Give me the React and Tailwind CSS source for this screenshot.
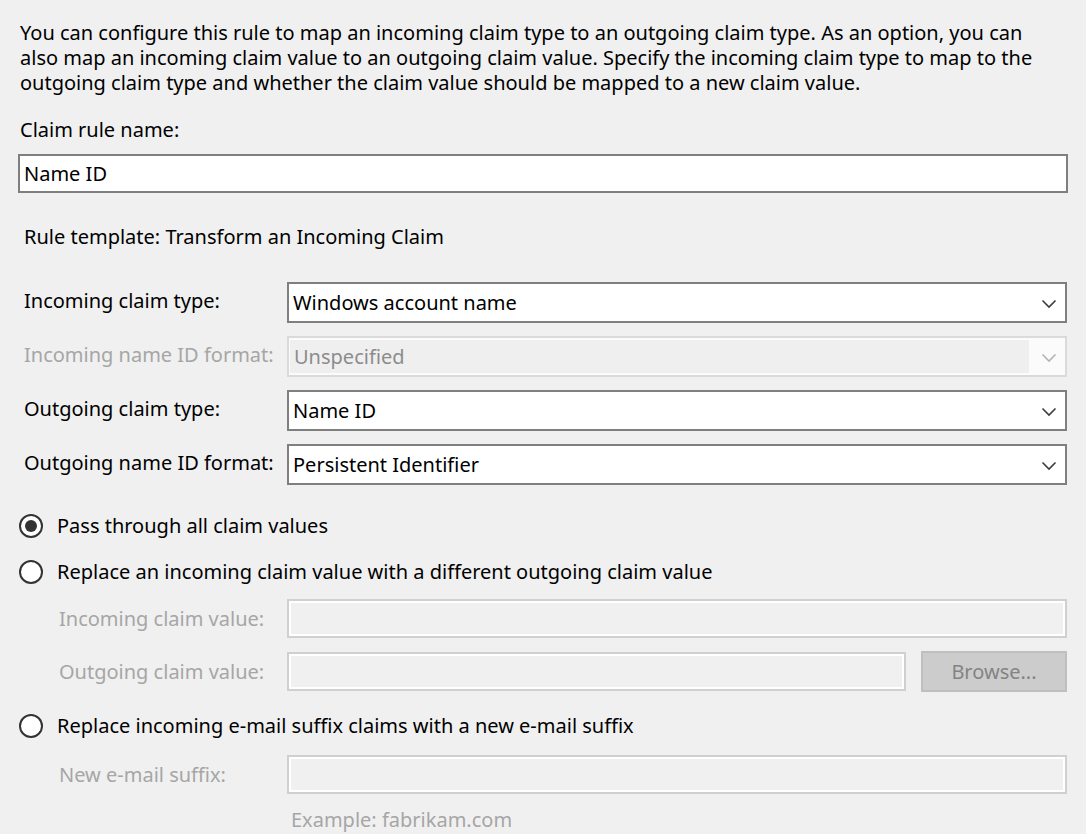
import React from 'react';

const Chevron = ({ disabled }) => (
  <svg width="16" height="10" viewBox="0 0 16 10" className="shrink-0">
    <polyline
      points="1.5,1.5 8,8 14.5,1.5"
      fill="none"
      stroke={disabled ? '#b4b4b4' : '#3c3c3c'}
      strokeWidth="1.6"
    />
  </svg>
);

const Dropdown = ({ value, disabled }) =>
  disabled ? (
    <div className="flex-1 h-[41px] border-2 border-[#dadada] bg-[#fbfbfb] flex items-stretch">
      <div className="flex-1 bg-[#efefef] my-[2px] ml-[1px] mr-[4px] pl-[4px] flex items-center text-[#8c8c8c]">
        {value}
      </div>
      <div className="w-[32px] flex items-center justify-center pt-[2px]">
        <Chevron disabled />
      </div>
    </div>
  ) : (
    <div className="flex-1 h-[41px] border-2 border-[#7f7f7f] bg-white flex items-center pl-[4px]">
      <span className="flex-1">{value}</span>
      <div className="w-[32px] flex items-center justify-center pt-[2px]">
        <Chevron />
      </div>
    </div>
  );

const DisabledInput = ({ className = '' }) => (
  <div
    className={`h-[39px] border-2 border-[#d0d0d0] bg-[#f0f0f0] shadow-[inset_0_0_0_2px_#ffffff] ${className}`}
  />
);

const Radio = ({ checked, label }) => (
  <div className="flex items-center h-[25px]">
    <div className="w-[24px] h-[24px] ml-[19px] rounded-full border-2 border-[#333333] bg-white flex items-center justify-center">
      {checked && <div className="w-[12px] h-[12px] rounded-full bg-[#333333]" />}
    </div>
    <span className="ml-[14px]">{label}</span>
  </div>
);

const rows = [
  { label: 'Incoming claim type:', value: 'Windows account name' },
  { label: 'Incoming name ID format:', value: 'Unspecified', disabled: true },
  { label: 'Outgoing claim type:', value: 'Name ID' },
  { label: 'Outgoing name ID format:', value: 'Persistent Identifier' },
];

export default function App() {
  return (
    <div className="w-[1086px] h-[834px] bg-[#f0f0f0] text-black text-[20px] leading-[25px] font-['Noto_Sans',sans-serif] overflow-hidden">
      <p className="pt-[20px] pl-[20px] pr-[30px]">
        You can configure this rule to map an incoming claim type to an outgoing claim type. As an option, you can
        also map an incoming claim value to an outgoing claim value. Specify the incoming claim type to map to the
        outgoing claim type and whether the claim value should be mapped to a new claim value.
      </p>

      <div className="mt-[22px] pl-[20px]">Claim rule name:</div>
      <div className="mt-[12px] ml-[18px] w-[1050px] h-[39px] border-2 border-[#7f7f7f] bg-white flex items-center pl-[4px]">
        Name ID
      </div>

      <div className="mt-[31px] pl-[24px]">Rule template: Transform an Incoming Claim</div>

      <div className="mt-[33px] flex flex-col gap-[13px] pl-[24px] pr-[19px]">
        {rows.map((r) => (
          <div key={r.label} className="flex items-center">
            <div className={`w-[263px] pb-[4px] ${r.disabled ? 'text-[#a6a6a6]' : ''}`}>{r.label}</div>
            <Dropdown value={r.value} disabled={r.disabled} />
          </div>
        ))}
      </div>

      <div className="mt-[28px]">
        <Radio checked label="Pass through all claim values" />
      </div>
      <div className="mt-[21px]">
        <Radio label="Replace an incoming claim value with a different outgoing claim value" />
      </div>

      <div className="mt-[15px] flex flex-col gap-[13px] pl-[59px] pr-[19px] text-[#a6a6a6]">
        <div className="flex items-center">
          <div className="w-[228px]">Incoming claim value:</div>
          <DisabledInput className="flex-1" />
        </div>
        <div className="flex items-center">
          <div className="w-[228px]">Outgoing claim value:</div>
          <DisabledInput className="flex-1" />
          <div className="ml-[15px] w-[146px] h-[41px] bg-[#cccccc] border-2 border-[#bfbfbf] flex items-center justify-center text-[#838383]">
            Browse...
          </div>
        </div>
      </div>

      <div className="mt-[21px]">
        <Radio label="Replace incoming e-mail suffix claims with a new e-mail suffix" />
      </div>

      <div className="mt-[17px] flex items-center pl-[59px] pr-[19px] text-[#a6a6a6]">
        <div className="w-[228px]">New e-mail suffix:</div>
        <DisabledInput className="flex-1" />
      </div>
      <div className="mt-[13px] pl-[291px] text-[#a6a6a6]">Example: fabrikam.com</div>
    </div>
  );
}
